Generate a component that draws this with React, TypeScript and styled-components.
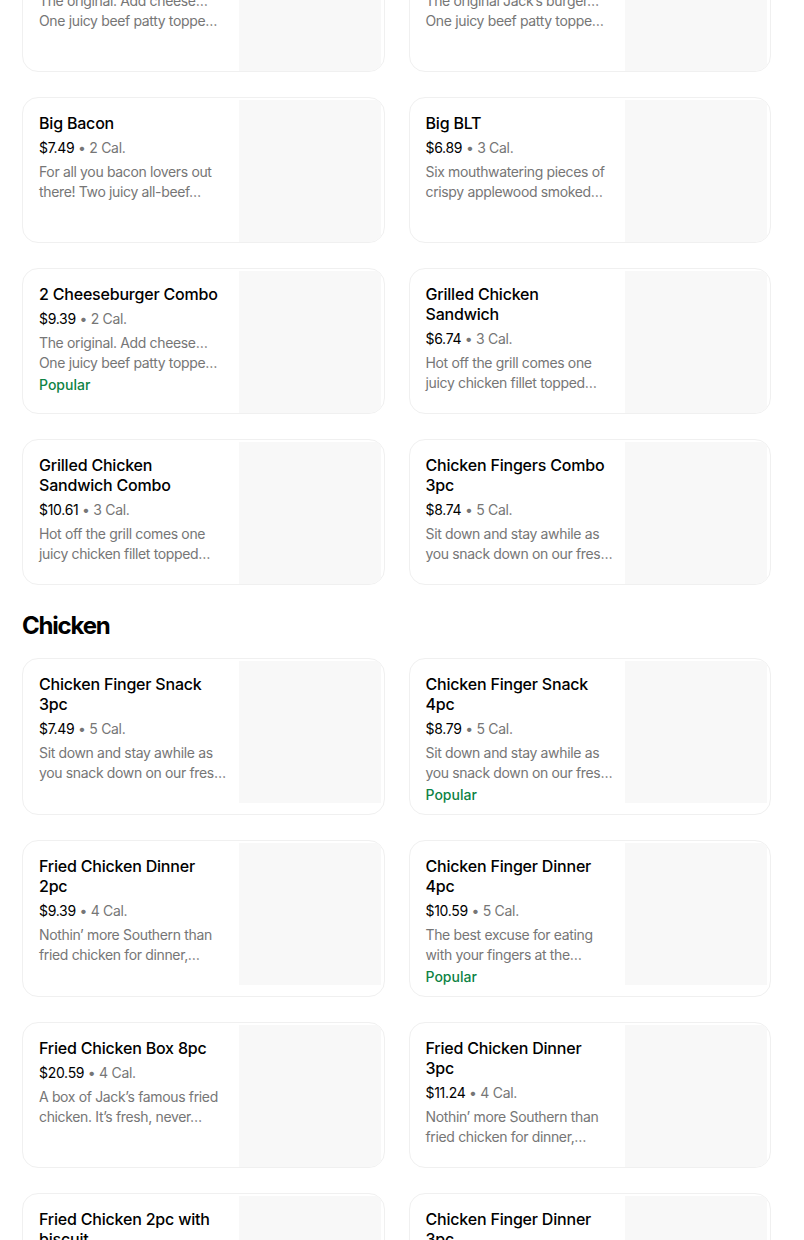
import React from 'react';
import styled, { createGlobalStyle } from 'styled-components';

const font = `Inter, 'Noto Sans', 'Liberation Sans', sans-serif`;

const GlobalStyle = createGlobalStyle`
  html, body {
    margin: 0;
    padding: 0;
    background: #fff;
  }
  body {
    font-family: ${font};
    color: #000;
    overflow: hidden;
  }
`;

type Item = {
  title: string;
  price: string;
  cal: string;
  desc: string[];
  popular?: boolean;
};

type Section = {
  name: string;
  items: Item[];
};

const menu: Section[] = [
  {
    name: 'Burgers',
    items: [
      {
        title: 'Cheeseburger',
        price: '$3.99',
        cal: '2 Cal.',
        desc: ['The original. Add cheese…', 'One juicy beef patty toppe…'],
      },
      {
        title: 'Jumbo Jack',
        price: '$5.49',
        cal: '2 Cal.',
        desc: ['The original Jack’s burger…', 'One juicy beef patty toppe…'],
      },
      {
        title: 'Big Bacon',
        price: '$7.49',
        cal: '2 Cal.',
        desc: ['For all you bacon lovers out', 'there! Two juicy all-beef…'],
      },
      {
        title: 'Big BLT',
        price: '$6.89',
        cal: '3 Cal.',
        desc: ['Six mouthwatering pieces of', 'crispy applewood smoked…'],
      },
      {
        title: '2 Cheeseburger Combo',
        price: '$9.39',
        cal: '2 Cal.',
        desc: ['The original. Add cheese…', 'One juicy beef patty toppe…'],
        popular: true,
      },
      {
        title: 'Grilled Chicken Sandwich',
        price: '$6.74',
        cal: '3 Cal.',
        desc: ['Hot off the grill comes one', 'juicy chicken fillet topped…'],
      },
      {
        title: 'Grilled Chicken Sandwich Combo',
        price: '$10.61',
        cal: '3 Cal.',
        desc: ['Hot off the grill comes one', 'juicy chicken fillet topped…'],
      },
      {
        title: 'Chicken Fingers Combo 3pc',
        price: '$8.74',
        cal: '5 Cal.',
        desc: ['Sit down and stay awhile as', 'you snack down on our fres…'],
      },
    ],
  },
  {
    name: 'Chicken',
    items: [
      {
        title: 'Chicken Finger Snack 3pc',
        price: '$7.49',
        cal: '5 Cal.',
        desc: ['Sit down and stay awhile as', 'you snack down on our fres…'],
      },
      {
        title: 'Chicken Finger Snack 4pc',
        price: '$8.79',
        cal: '5 Cal.',
        desc: ['Sit down and stay awhile as', 'you snack down on our fres…'],
        popular: true,
      },
      {
        title: 'Fried Chicken Dinner 2pc',
        price: '$9.39',
        cal: '4 Cal.',
        desc: ['Nothin’ more Southern than', 'fried chicken for dinner,…'],
      },
      {
        title: 'Chicken Finger Dinner 4pc',
        price: '$10.59',
        cal: '5 Cal.',
        desc: ['The best excuse for eating', 'with your fingers at the…'],
        popular: true,
      },
      {
        title: 'Fried Chicken Box 8pc',
        price: '$20.59',
        cal: '4 Cal.',
        desc: ['A box of Jack’s famous fried', 'chicken. It’s fresh, never…'],
      },
      {
        title: 'Fried Chicken Dinner 3pc',
        price: '$11.24',
        cal: '4 Cal.',
        desc: ['Nothin’ more Southern than', 'fried chicken for dinner,…'],
      },
      {
        title: 'Fried Chicken 2pc with biscuit',
        price: '$8.99',
        cal: '4 Cal.',
        desc: ['Nothin’ more Southern than', 'fried chicken with a warm…'],
      },
      {
        title: 'Chicken Finger Dinner 3pc',
        price: '$9.59',
        cal: '5 Cal.',
        desc: ['The best excuse for eating', 'with your fingers at the…'],
      },
    ],
  },
];

// page is shown scrolled part way down the menu
const Page = styled.div`
  display: flex;
  flex-direction: column;
  gap: 25px;
  width: 749px;
  margin-top: -122px;
  padding-left: 22px;
`;

const SectionBlock = styled.section`
  display: flex;
  flex-direction: column;
  gap: 16px;
`;

const SectionTitle = styled.h2`
  margin: 0;
  font-size: 24px;
  line-height: 32px;
  font-weight: 700;
  letter-spacing: -1.2px;
  color: #000;
`;

const Grid = styled.div`
  display: grid;
  grid-template-columns: 1fr 1fr;
  column-gap: 24px;
  row-gap: 25px;
`;

const Card = styled.div`
  display: flex;
  min-width: 0;
  border: 1px solid #f0f0f0;
  border-radius: 16px;
  overflow: hidden;
  background: #fff;
`;

const Info = styled.div`
  flex: 1;
  min-width: 0;
  display: flex;
  flex-direction: column;
  padding: 15px 16px 11px;
`;

const Title = styled.div`
  font-size: 16px;
  line-height: 20px;
  font-weight: 500;
  letter-spacing: -0.2px;
  color: #000;
`;

const PriceRow = styled.div`
  margin-top: 5px;
  font-size: 14px;
  line-height: 20px;
  letter-spacing: -0.3px;
  color: #767676;
  white-space: nowrap;
`;

const Price = styled.span`
  color: #000;
`;

const Desc = styled.div`
  margin-top: 4px;
  font-size: 14px;
  line-height: 20px;
  letter-spacing: -0.35px;
  color: #767676;
`;

// lines are already trimmed to what the card shows
const DescLine = styled.div`
  white-space: nowrap;
`;

const Badge = styled.div`
  margin-top: 4px;
  font-size: 14px;
  line-height: 16px;
  font-weight: 500;
  color: #0e8345;
`;

const Thumb = styled.div`
  flex-shrink: 0;
  align-self: flex-start;
  width: 142px;
  height: 142px;
  margin: 2px 3px 0 0;
  background: #f8f8f8;
`;

const MenuCard: React.FC<{ item: Item }> = ({ item }) => (
  <Card>
    <Info>
      <Title>{item.title}</Title>
      <PriceRow>
        <Price>{item.price}</Price> • {item.cal}
      </PriceRow>
      <Desc>
        {item.desc.map((line, i) => (
          <DescLine key={i}>{line}</DescLine>
        ))}
      </Desc>
      {item.popular ? <Badge>Popular</Badge> : null}
    </Info>
    <Thumb />
  </Card>
);

export default function App() {
  return (
    <>
      <GlobalStyle />
      <Page>
        {menu.map((section) => (
          <SectionBlock key={section.name}>
            <SectionTitle>{section.name}</SectionTitle>
            <Grid>
              {section.items.map((item) => (
                <MenuCard key={item.title} item={item} />
              ))}
            </Grid>
          </SectionBlock>
        ))}
      </Page>
    </>
  );
}
